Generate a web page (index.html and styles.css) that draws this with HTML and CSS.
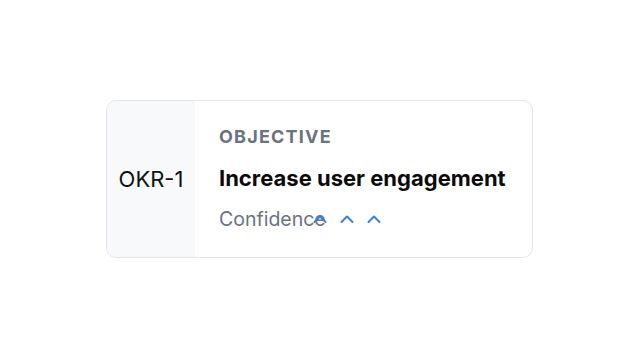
FILE: index.html
```html
<!DOCTYPE html>
<html lang="en">
<head>
    <meta charset="UTF-8">
    <meta name="viewport" content="width=device-width, initial-scale=1.0">
    <title>OKR</title>
    <link rel="stylesheet" href="styles.css">
</head>
<body>
    <div class="okr-card">
        <div class="okr-id">OKR-1</div>
        <div class="okr-body">
            <div class="okr-label">OBJECTIVE</div>
            <div class="okr-title">Increase user engagement</div>
            <div class="okr-confidence">
                <span>Confidence</span>
                <div class="chevrons">
                    <svg viewBox="0 0 14 14"><path d="M1.5 10 L7 4.5 L12.5 10"/></svg>
                    <svg viewBox="0 0 14 14"><path d="M1.5 10 L7 4.5 L12.5 10"/></svg>
                    <svg viewBox="0 0 14 14"><path d="M1.5 10 L7 4.5 L12.5 10"/></svg>
                </div>
            </div>
        </div>
    </div>
</body>
</html>
```

FILE: styles.css
```css
body {
    font-family: Inter, "Liberation Sans", sans-serif;
    background-color: #fff;
    margin: 0;
    height: 357px;
    display: flex;
    align-items: center;
    justify-content: center;
}
.okr-card {
    display: flex;
    width: 427px;
    height: 158px;
    box-sizing: border-box;
    border: 1px solid #e3e5e8;
    border-radius: 10px;
    overflow: hidden;
    margin-left: -1px;
}
.okr-id {
    width: 88px;
    background-color: #f7f9fb;
    display: flex;
    align-items: center;
    justify-content: center;
    font-size: 22px;
    color: #111;
}
.okr-body {
    padding: 25px 0 0 24px;
}
.okr-label {
    font-size: 18px;
    font-weight: 700;
    letter-spacing: 1.2px;
    color: #6b7280;
}
.okr-title {
    margin-top: 18px;
    font-size: 22px;
    font-weight: 700;
    color: #0b0b0b;
}
.okr-confidence {
    margin-top: 16px;
    display: flex;
    align-items: center;
    font-size: 19.5px;
    color: #6b7280;
}
.chevrons {
    display: flex;
    gap: 13px;
    margin-left: -13px;
}
.chevrons svg {
    width: 14px;
    height: 14px;
    fill: none;
    stroke: #3b7fd6;
    stroke-width: 2;
    stroke-linecap: round;
    stroke-linejoin: round;
}
```
